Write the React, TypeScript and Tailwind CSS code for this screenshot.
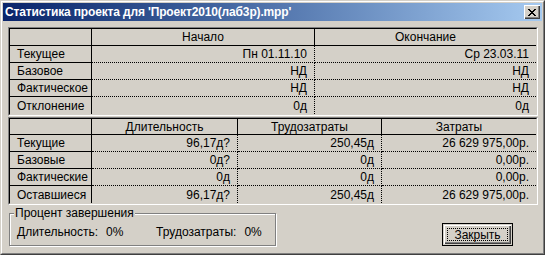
const rows1 = [
  ["Текущее", "Пн 01.11.10", "Ср 23.03.11"],
  ["Базовое", "НД", "НД"],
  ["Фактическое", "НД", "НД"],
  ["Отклонение", "0д", "0д"],
];

const rows2 = [
  ["Текущие", "96,17д?", "250,45д", "26 629 975,00р."],
  ["Базовые", "0д?", "0д", "0,00р."],
  ["Фактические", "0д", "0д", "0,00р."],
  ["Оставшиеся", "96,17д?", "250,45д", "26 629 975,00р."],
];

// sunken frame around a grid
const Frame = ({ children }: { children: React.ReactNode }) => (
  <div className="ml-[5px] w-[530px] border border-t-[#808080] border-l-[#808080] border-r-white border-b-white">
    <div className="border border-t-black border-l-black border-r-[#d4d0c8] border-b-[#d4d0c8]">
      {children}
    </div>
  </div>
);

const StatGrid = ({
  cols,
  headers,
  rows,
  headerH,
}: {
  cols: string;
  headers: string[];
  rows: string[][];
  headerH: string;
}) => {
  const n = headers.length;
  return (
    <div className={`grid ${cols}`}>
      {headers.map((h, i) => (
        <div
          key={h + i}
          className={`${headerH} flex items-center justify-center border-b border-black ${
            i < n - 1 ? "border-r" : ""
          }`}
        >
          {h}
        </div>
      ))}
      {rows.map((r, ri) =>
        r.map((c, ci) => {
          const last = ri === rows.length - 1;
          if (ci === 0)
            return (
              <div
                key={ri + "-" + ci}
                className={`h-[17px] flex items-center pl-[7px] border-r border-black ${
                  last ? "" : "border-b"
                }`}
              >
                {c}
              </div>
            );
          return (
            <div
              key={ri + "-" + ci}
              className={`h-[17px] flex items-center justify-end pr-[7px] border-black border-dotted ${
                last ? "" : "border-b"
              } ${ci < n - 1 ? "border-r" : ""}`}
            >
              {c}
            </div>
          );
        })
      )}
    </div>
  );
};

export default function App() {
  return (
    <div
      className="w-[545px] h-[255px] bg-[#d4d0c8] text-black text-[12px] leading-none border border-t-[#d4d0c8] border-l-[#d4d0c8] border-r-[#404040] border-b-[#404040]"
      style={{ fontFamily: '"Liberation Sans", Arial, sans-serif' }}
    >
      <div className="h-full border border-t-white border-l-white border-r-[#808080] border-b-[#808080] p-px flex flex-col">
        {/* Title bar */}
        <div className="h-[18px] flex items-center justify-between bg-linear-to-r from-[#0a246a] to-[#a6caf0] pl-[2px] pr-[2px]">
          <span className="text-white font-bold text-[12px] tracking-[-0.15px]">
            Статистика проекта для 'Проект2010(лаб3р).mpp'
          </span>
          <div className="w-[16px] h-[14px] bg-[#d4d0c8] flex items-center justify-center shadow-[inset_1px_1px_0_#fff,inset_-1px_-1px_0_#404040,inset_-2px_-2px_0_#808080]">
            <svg width="8" height="7" viewBox="0 0 8 7" shapeRendering="crispEdges">
              <path d="M0 0h2v1h1v1h2V1h1V0h2v1H7v1H6v1H5v1h1v1h1v1h1v1H6V6H5V5H3v1H2v1H0V6h1V5h1V4h1V3H2V2H1V1H0z" fill="#000" />
            </svg>
          </div>
        </div>

        <div className="mt-[6px] flex flex-col gap-px">
          <Frame>
            <StatGrid
              cols="grid-cols-[82px_223px_221px]"
              headers={["", "Начало", "Окончание"]}
              rows={rows1}
              headerH="h-[17px]"
            />
          </Frame>
          <Frame>
            <StatGrid
              cols="grid-cols-[82px_146px_144px_154px]"
              headers={["", "Длительность", "Трудозатраты", "Затраты"]}
              rows={rows2}
              headerH="h-[16px]"
            />
          </Frame>
        </div>

        <div className="flex items-start mt-[7px]">
          {/* Group box */}
          <div className="relative ml-[6px] mt-[1px] w-[267px] h-[33px] border border-[#808080] shadow-[inset_1px_1px_0_#fff,1px_1px_0_#fff]">
            <span className="absolute left-[4px] -top-[7px] bg-[#d4d0c8] px-px">
              Процент завершения
            </span>
            <div className="flex items-center h-full pt-[5px] pl-[7px] whitespace-nowrap">
              <span>Длительность:</span>
              <span className="ml-[8px] w-[50px]">0%</span>
              <span>Трудозатраты:</span>
              <span className="ml-[8px]">0%</span>
            </div>
          </div>

          <button className="ml-[166px] mt-[11px] w-[71px] h-[23px] border border-black bg-[#d4d0c8] p-px">
            <div className="w-full h-full flex items-center justify-center shadow-[inset_1px_1px_0_#fff,inset_-1px_-1px_0_#404040,inset_-2px_-2px_0_#808080] p-[3px]">
              <div className="w-full h-full border border-dotted border-black flex items-center justify-center">
                Закрыть
              </div>
            </div>
          </button>
        </div>
      </div>
    </div>
  );
}
